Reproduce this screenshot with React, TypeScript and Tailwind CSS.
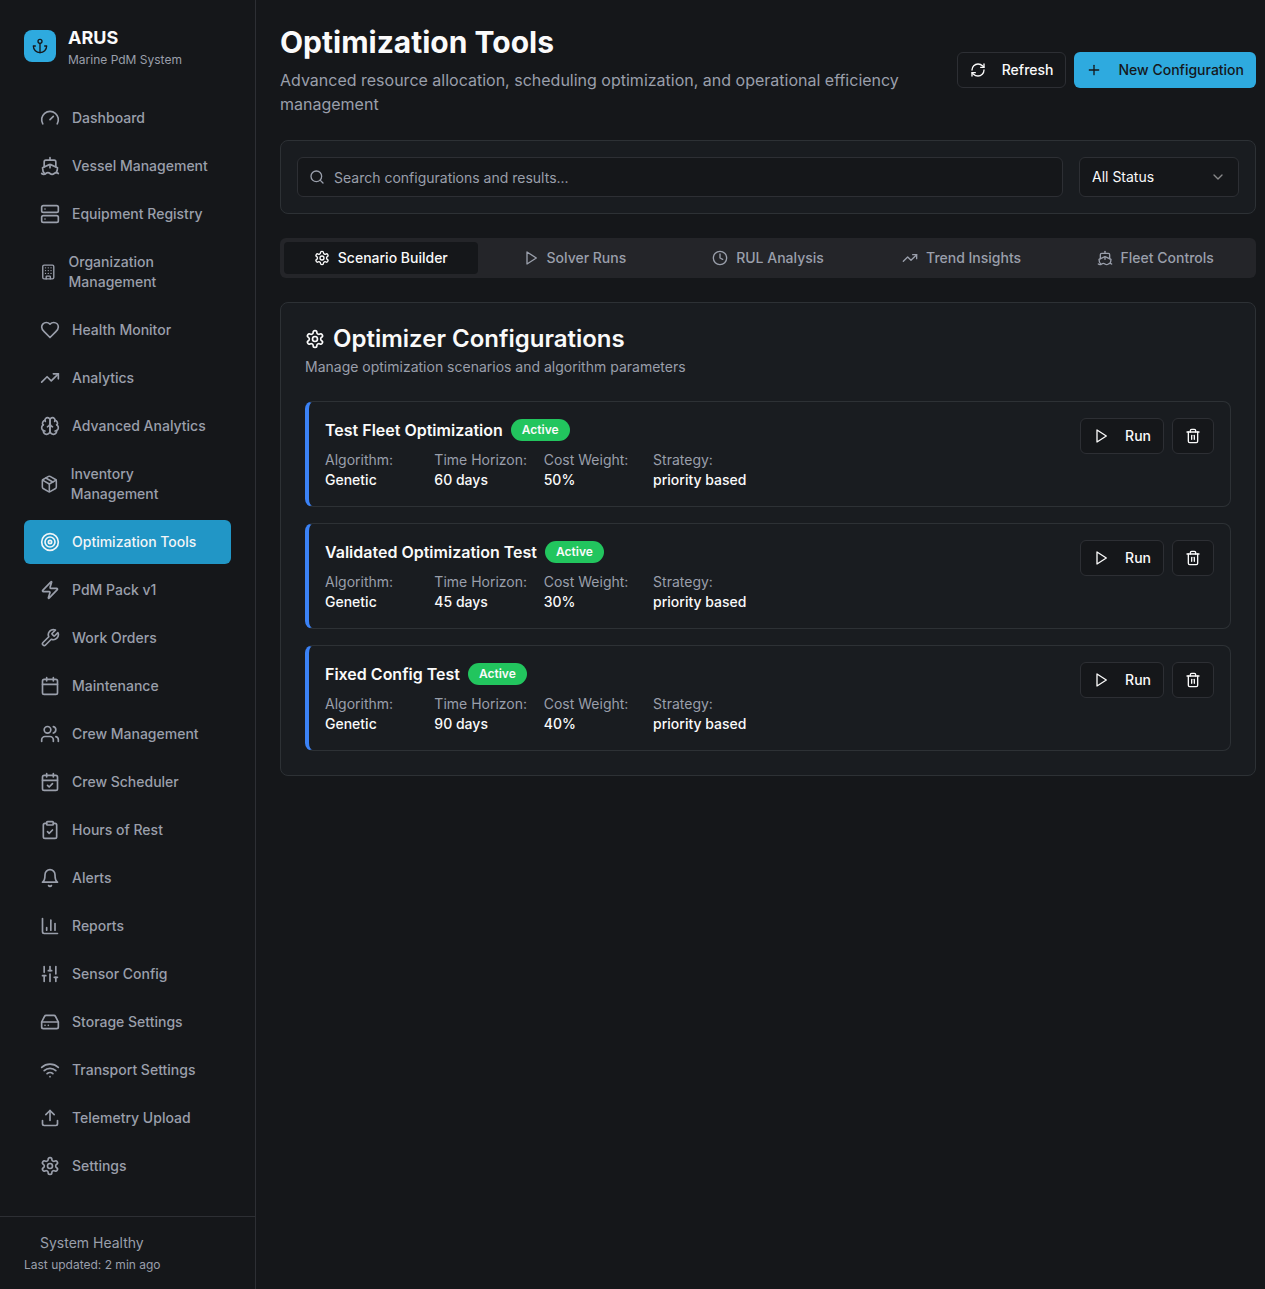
import { useState, type ReactNode } from "react";
import {
  Building,
  Calendar,
  CalendarCheck,
  ChartColumn,
  ChevronDown,
  ClipboardCheck,
  Clock,
  Gauge,
  HardDrive,
  Package,
  Plus,
  RefreshCw,
  Search,
  Server,
  Ship,
  SlidersVertical,
  Target,
  Trash2,
  TrendingUp,
  Users,
  Wifi,
  Zap,
} from "lucide-react";

type IconProps = { className?: string };

function Stroke({ className, children }: { className?: string; children: ReactNode }) {
  return (
    <svg
      className={className}
      width="24"
      height="24"
      viewBox="0 0 24 24"
      fill="none"
      stroke="currentColor"
      strokeWidth="2"
      strokeLinecap="round"
      strokeLinejoin="round"
      aria-hidden="true"
    >
      {children}
    </svg>
  );
}

function Anchor({ className }: IconProps) {
  return (
    <Stroke className={className}>
      <path d="M12 22V8" />
      <path d="M5 12H2a10 10 0 0 0 20 0h-3" />
      <circle cx="12" cy="5" r="3" />
    </Stroke>
  );
}

function Brain({ className }: IconProps) {
  return (
    <Stroke className={className}>
      <path d="M12 5a3 3 0 1 0-5.997.125 4 4 0 0 0-2.526 5.77 4 4 0 0 0 .556 6.588A4 4 0 1 0 12 18Z" />
      <path d="M12 5a3 3 0 1 1 5.997.125 4 4 0 0 1 2.526 5.77 4 4 0 0 1-.556 6.588A4 4 0 1 1 12 18Z" />
      <path d="M15 13a4.5 4.5 0 0 1-3-4 4.5 4.5 0 0 1-3 4" />
      <path d="M17.599 6.5a3 3 0 0 0 .399-1.375" />
      <path d="M6.003 5.125A3 3 0 0 0 6.401 6.5" />
      <path d="M3.477 10.896a4 4 0 0 1 .585-.396" />
      <path d="M19.938 10.5a4 4 0 0 1 .585.396" />
      <path d="M6 18a4 4 0 0 1-1.967-.516" />
      <path d="M19.967 17.484A4 4 0 0 1 18 18" />
    </Stroke>
  );
}

function Heart({ className }: IconProps) {
  return (
    <Stroke className={className}>
      <path d="M19 14c1.49-1.46 3-3.21 3-5.5A5.5 5.5 0 0 0 16.5 3c-1.76 0-3 .5-4.5 2-1.5-1.5-2.74-2-4.5-2A5.5 5.5 0 0 0 2 8.5c0 2.3 1.5 4.05 3 5.5l7 7Z" />
    </Stroke>
  );
}

function Wrench({ className }: IconProps) {
  return (
    <Stroke className={className}>
      <path d="M14.7 6.3a1 1 0 0 0 0 1.4l1.6 1.6a1 1 0 0 0 1.4 0l3.77-3.77a6 6 0 0 1-7.94 7.94l-6.91 6.91a2.12 2.12 0 0 1-3-3l6.91-6.91a6 6 0 0 1 7.94-7.94l-3.76 3.76z" />
    </Stroke>
  );
}

function Bell({ className }: IconProps) {
  return (
    <Stroke className={className}>
      <path d="M6 8a6 6 0 0 1 12 0c0 7 3 9 3 9H3s3-2 3-9" />
      <path d="M10.3 21a1.94 1.94 0 0 0 3.4 0" />
    </Stroke>
  );
}

function Upload({ className }: IconProps) {
  return (
    <Stroke className={className}>
      <path d="M21 15v4a2 2 0 0 1-2 2H5a2 2 0 0 1-2-2v-4" />
      <polyline points="17 8 12 3 7 8" />
      <line x1="12" x2="12" y1="3" y2="15" />
    </Stroke>
  );
}

function Play({ className }: IconProps) {
  return (
    <Stroke className={className}>
      <polygon points="6 3 20 12 6 21 6 3" />
    </Stroke>
  );
}

function Settings({ className }: IconProps) {
  return (
    <Stroke className={className}>
      <path d="M12.22 2h-.44a2 2 0 0 0-2 2v.18a2 2 0 0 1-1 1.73l-.43.25a2 2 0 0 1-2 0l-.15-.08a2 2 0 0 0-2.73.73l-.22.38a2 2 0 0 0 .73 2.73l.15.1a2 2 0 0 1 1 1.72v.51a2 2 0 0 1-1 1.74l-.15.09a2 2 0 0 0-.73 2.73l.22.38a2 2 0 0 0 2.73.73l.15-.08a2 2 0 0 1 2 0l.43.25a2 2 0 0 1 1 1.73V20a2 2 0 0 0 2 2h.44a2 2 0 0 0 2-2v-.18a2 2 0 0 1 1-1.73l.43-.25a2 2 0 0 1 2 0l.15.08a2 2 0 0 0 2.73-.73l.22-.39a2 2 0 0 0-.73-2.73l-.15-.08a2 2 0 0 1-1-1.74v-.5a2 2 0 0 1 1-1.74l.15-.09a2 2 0 0 0 .73-2.73l-.22-.38a2 2 0 0 0-2.73-.73l-.15.08a2 2 0 0 1-2 0l-.43-.25a2 2 0 0 1-1-1.73V4a2 2 0 0 0-2-2z" />
      <circle cx="12" cy="12" r="3" />
    </Stroke>
  );
}

const navItems = [
  { label: "Dashboard", icon: Gauge },
  { label: "Vessel Management", icon: Ship },
  { label: "Equipment Registry", icon: Server },
  { label: "Organization Management", icon: Building },
  { label: "Health Monitor", icon: Heart },
  { label: "Analytics", icon: TrendingUp },
  { label: "Advanced Analytics", icon: Brain },
  { label: "Inventory Management", icon: Package },
  { label: "Optimization Tools", icon: Target },
  { label: "PdM Pack v1", icon: Zap },
  { label: "Work Orders", icon: Wrench },
  { label: "Maintenance", icon: Calendar },
  { label: "Crew Management", icon: Users },
  { label: "Crew Scheduler", icon: CalendarCheck },
  { label: "Hours of Rest", icon: ClipboardCheck },
  { label: "Alerts", icon: Bell },
  { label: "Reports", icon: ChartColumn },
  { label: "Sensor Config", icon: SlidersVertical },
  { label: "Storage Settings", icon: HardDrive },
  { label: "Transport Settings", icon: Wifi },
  { label: "Telemetry Upload", icon: Upload },
  { label: "Settings", icon: Settings },
];

const tabs = [
  { label: "Scenario Builder", icon: Settings },
  { label: "Solver Runs", icon: Play },
  { label: "RUL Analysis", icon: Clock },
  { label: "Trend Insights", icon: TrendingUp },
  { label: "Fleet Controls", icon: Ship },
];

const configurations = [
  { name: "Test Fleet Optimization", horizon: "60 days", cost: "50%" },
  { name: "Validated Optimization Test", horizon: "45 days", cost: "30%" },
  { name: "Fixed Config Test", horizon: "90 days", cost: "40%" },
];

function Sidebar() {
  return (
    <aside className="flex w-64 shrink-0 flex-col border-r border-[#2d2f34] bg-[#15171a]">
      <div className="flex items-center gap-3 p-6">
        <div className="flex size-8 items-center justify-center rounded-lg bg-[#2eaadf] text-[#15171a]">
          <Anchor className="size-4" />
        </div>
        <div>
          <div className="text-lg font-bold text-[#fafafa]">ARUS</div>
          <p className="text-xs text-[#9a9fab]">Marine PdM System</p>
        </div>
      </div>
      <nav className="flex flex-1 flex-col gap-1 px-6 pt-1 pb-7">
        {navItems.map(({ label, icon: Icon }) => {
          const active = label === "Optimization Tools";
          return (
            <a
              key={label}
              href="#"
              aria-current={active ? "page" : undefined}
              className={
                active
                  ? "flex items-center gap-3 rounded-md bg-[#2196c6] px-4 py-3 text-sm font-medium text-[#f2f5f7]"
                  : "flex items-center gap-3 rounded-md px-4 py-3 text-sm font-medium text-[#9a9fab]"
              }
            >
              <Icon className="h-5 w-5" />
              <span>{label}</span>
            </a>
          );
        })}
      </nav>
      <div className="border-t border-[#2d2f34] px-6 py-4 text-[#9a9fab]">
        <p className="pl-4 text-sm">System Healthy</p>
        <p className="mt-1 text-xs">Last updated: 2 min ago</p>
      </div>
    </aside>
  );
}

function Field({ label, value }: { label: string; value: string }) {
  return (
    <div>
      <dt className="text-[#9a9fab]">{label}</dt>
      <dd className="font-medium text-[#fafafa]">{value}</dd>
    </div>
  );
}

export default function App() {
  const [tab, setTab] = useState("Scenario Builder");
  const [query, setQuery] = useState("");
  return (
    <div className="flex min-h-screen bg-[#15171a] font-['Inter',sans-serif] text-[#fafafa]">
      <Sidebar />
      <main className="flex min-w-0 flex-1 flex-col gap-6 py-6 pr-[9px] pl-6">
        <header className="flex items-center justify-between">
          <div>
            <h1 className="text-3xl font-bold">Optimization Tools</h1>
            <p className="mt-2 text-base text-[#9a9fab]">
              Advanced resource allocation, scheduling optimization, and operational efficiency management
            </p>
          </div>
          <div className="flex shrink-0 gap-2">
            <button
              type="button"
              className="flex h-9 items-center gap-4 rounded-md border border-[#2d2f34] bg-[#15171a] px-3 text-sm font-medium"
            >
              <RefreshCw className="size-4" />
              Refresh
            </button>
            <button
              type="button"
              className="flex h-9 items-center gap-4 rounded-md bg-[#2eaadf] px-3 text-sm font-medium text-[#15171a]"
            >
              <Plus className="size-4" />
              New Configuration
            </button>
          </div>
        </header>

        <section aria-label="Filters" className="flex gap-4 rounded-lg border border-[#2d3135] bg-[#191c20] p-4">
          <div className="relative flex-1">
            <Search className="absolute top-3 left-3 size-4 text-[#9a9fab]" />
            <input
              type="text"
              aria-label="Search configurations and results"
              placeholder="Search configurations and results..."
              value={query}
              onChange={(e) => setQuery(e.target.value)}
              className="h-10 w-full rounded-md border border-[#2d2f34] bg-[#15171a] pr-3 pl-9 text-sm placeholder:text-[#9a9fab]"
            />
          </div>
          <div className="relative w-40">
            <select
              aria-label="Status"
              className="h-10 w-full appearance-none rounded-md border border-[#2d2f34] bg-[#15171a] px-3 text-sm"
            >
              <option>All Status</option>
              <option>Active</option>
              <option>Inactive</option>
            </select>
            <ChevronDown className="pointer-events-none absolute top-3 right-[13px] size-4 opacity-50" />
          </div>
        </section>

        <div role="tablist" className="grid grid-cols-5 rounded-md bg-[#242529] p-1">
          {tabs.map(({ label, icon: Icon }) => (
            <button
              key={label}
              type="button"
              role="tab"
              aria-selected={tab === label}
              onClick={() => setTab(label)}
              className={
                tab === label
                  ? "flex h-8 items-center justify-center gap-2 rounded-sm bg-[#15171a] text-sm font-medium text-[#fafafa]"
                  : "flex h-8 items-center justify-center gap-2 rounded-sm text-sm font-medium text-[#9a9fab]"
              }
            >
              <Icon className="size-4" />
              {label}
            </button>
          ))}
        </div>

        <section className="rounded-lg border border-[#2d3135] bg-[#191c20] p-6">
          <h2 className="flex items-center gap-2 text-2xl leading-6 font-semibold">
            <Settings className="size-5" />
            Optimizer Configurations
          </h2>
          <p className="mt-1.5 text-sm text-[#9a9fab]">Manage optimization scenarios and algorithm parameters</p>
          <div className="mt-6 flex flex-col gap-4">
            {configurations.map(({ name, horizon, cost }) => (
              <article
                key={name}
                className="flex items-start justify-between rounded-lg border border-l-4 border-[#2d3135] border-l-[#3b82f6] p-4"
              >
                <div>
                  <div className="flex items-center gap-2">
                    <h3 className="text-base font-semibold">{name}</h3>
                    <span className="rounded-full border border-transparent bg-[#22c55e] px-2.5 py-0.5 text-xs font-semibold">
                      Active
                    </span>
                  </div>
                  <dl className="mt-2 grid grid-cols-4 gap-4 text-sm">
                    <Field label="Algorithm:" value="Genetic" />
                    <Field label="Time Horizon:" value={horizon} />
                    <Field label="Cost Weight:" value={cost} />
                    <Field label="Strategy:" value="priority based" />
                  </dl>
                </div>
                <div className="flex gap-2">
                  <button
                    type="button"
                    className="flex h-9 items-center gap-4 rounded-md border border-[#2d2f34] bg-[#15171a] px-3 text-sm font-medium"
                  >
                    <Play className="size-4" />
                    Run
                  </button>
                  <button
                    type="button"
                    aria-label={`Delete ${name}`}
                    className="flex h-9 items-center rounded-md border border-[#2d2f34] bg-[#15171a] px-3"
                  >
                    <Trash2 className="size-4" />
                  </button>
                </div>
              </article>
            ))}
          </div>
        </section>
      </main>
    </div>
  );
}
